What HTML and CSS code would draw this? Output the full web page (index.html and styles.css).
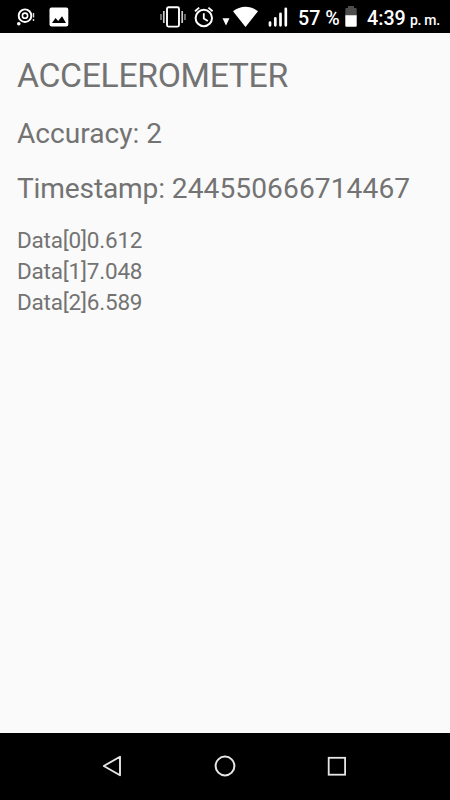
FILE: index.html
```html
<!DOCTYPE html>
<html lang="en">

<head>
    <meta charset="UTF-8">
    <meta name="viewport" content="width=device-width, initial-scale=1.0">
    <title>Accelerometer</title>
    <link rel="stylesheet" href="styles.css">
</head>

<body>
    <div class="status-bar">
        <svg class="icon-app" width="20" height="20" viewBox="0 0 20 20">
            <circle cx="9" cy="8.7" r="6.3" fill="none" stroke="#fff" stroke-width="1.9"/>
            <circle cx="9" cy="8.7" r="2.6" fill="none" stroke="#fff" stroke-width="1.6"/>
            <circle cx="2.8" cy="16.8" r="1.8" fill="#fff"/>
            <path d="M17.5 6v4.5M17.5 12v2" stroke="#ddd" stroke-width="1.4"/>
        </svg>
        <svg class="icon-image" width="20" height="20" viewBox="0 0 20 20">
            <rect x="0.5" y="0.4" width="18.8" height="19" rx="2" fill="#fff"/>
            <path d="M3 16l3.5-5 2.7 3L13 9.3l4 6.7z" fill="#000"/>
        </svg>
        <div class="status-right">
            <svg class="icon-vibrate" width="26" height="22" viewBox="0 0 26 22">
                <rect x="7" y="1.2" width="12" height="19.4" rx="1.5" fill="none" stroke="#fff" stroke-width="1.9"/>
                <path d="M3.8 5v12M22.2 5v12" stroke="#ccc" stroke-width="1.7"/>
                <path d="M1 8v6M25 8v6" stroke="#999" stroke-width="1.4"/>
            </svg>
            <svg class="icon-alarm" width="20" height="22" viewBox="0 0 20 22">
                <circle cx="9.8" cy="12" r="8.2" fill="none" stroke="#fff" stroke-width="2"/>
                <path d="M9.8 7.2v5.3l4 2.4M1 5.3l4.2-3.7M18.6 5.3l-4.2-3.7" fill="none" stroke="#fff" stroke-width="1.8"/>
            </svg>
            <svg class="icon-wifi" width="37" height="22" viewBox="0 0 37 22">
                <path d="M0.5 12.2h7L4 19.4z" fill="#fff"/>
                <path d="M11 5.2C18.5-0.9 28.5-0.9 36 5.2L23.5 21z" fill="#fff"/>
            </svg>
            <svg class="icon-signal" width="20" height="22" viewBox="0 0 20 22">
                <path d="M2 16.5v2.8M7.3 12.3v7M12.5 7.8v11.5M17.8 2.8v16.5" stroke="#fff" stroke-width="2.7" stroke-linecap="round"/>
            </svg>
            <span class="percent">57 %</span>
            <svg class="icon-battery" width="12" height="22" viewBox="0 0 12 22">
                <path d="M0.3 11V3q0-1 1-1H3V0h6v2h1.7q1 0 1 1v8z" fill="#4d4d4d"/>
                <path d="M0.3 9.3h11.4v10.2q0 1.2-1 1.2H1.3q-1 0-1-1.2z" fill="#fff"/>
            </svg>
            <span class="clock">4:39</span>
            <span class="period">p. m.</span>
        </div>
    </div>

    <div class="content">
        <div class="sensor-name">ACCELEROMETER</div>
        <div class="info accuracy">Accuracy: 2</div>
        <div class="info timestamp">Timestamp: <span class="digits">244550666714467</span></div>
        <div class="data">
            <div>Data[0]0.612</div>
            <div>Data[1]7.048</div>
            <div>Data[2]6.589</div>
        </div>
    </div>

    <div class="nav-bar">
        <svg width="24" height="24" viewBox="0 0 24 24">
            <path d="M20 2.7v18.6L3.8 12z" fill="none" stroke="#e6e6e6" stroke-width="1.9" stroke-linejoin="round"/>
        </svg>
        <svg width="24" height="24" viewBox="0 0 24 24">
            <circle cx="12" cy="12" r="9.4" fill="none" stroke="#e6e6e6" stroke-width="2"/>
        </svg>
        <svg width="24" height="24" viewBox="0 0 24 24">
            <rect x="3.7" y="3.8" width="16.4" height="16.9" fill="none" stroke="#e6e6e6" stroke-width="1.8"/>
        </svg>
    </div>
</body>

</html>
```
FILE: styles.css
```css
* {
    box-sizing: border-box;
}

body {
    display: flex;
    flex-direction: column;
    height: 100vh;
    margin: 0;
    background-color: #fafafa;
    font-family: Roboto, sans-serif;
    color: #737373;
}

svg {
    display: block;
    flex: none;
}

/* status bar */
.status-bar {
    display: flex;
    align-items: flex-start;
    height: 33px;
    padding: 6px 10px 0 16px;
    background-color: #000;
    color: #fff;
}

.status-right {
    display: flex;
    align-items: flex-start;
    margin-left: auto;
    white-space: nowrap;
}

.icon-app {
    margin-top: 1px;
}

.icon-image {
    margin: 1px 0 0 13px;
}

.icon-alarm {
    margin-left: 8px;
}

.icon-wifi {
    margin-left: 8px;
}

.icon-signal {
    margin-left: 9px;
}

.percent,
.clock,
.period {
    font-size: 19.7px;
    font-weight: 500;
    line-height: 25px;
}

.percent {
    width: 42px;
    margin-left: 10px;
}

.icon-battery {
    margin-left: 5px;
}

.clock {
    width: 40px;
    margin-left: 10px;
}

.period {
    width: 30px;
    margin-left: 3px;
    font-size: 14px;
    letter-spacing: -0.3px;
    line-height: 29px;
}

/* sensor readings */
.content {
    flex: 1;
    padding: 22.5px 17px 0;
}

.sensor-name {
    font-size: 33.75px;
    letter-spacing: -0.35px;
    line-height: 40px;
}

.info {
    font-size: 28.125px;
    line-height: 34px;
}

.accuracy {
    margin-top: 21px;
}

.timestamp {
    margin-top: 21px;
    letter-spacing: -0.15px;
}

.digits {
    letter-spacing: 0.1px;
}

.data {
    margin-top: 19px;
    font-size: 22.5px;
    letter-spacing: -0.2px;
    line-height: 31px;
}

/* navigation buttons */
.nav-bar {
    display: flex;
    justify-content: center;
    gap: 88.5px;
    height: 67px;
    padding: 21px 1px 0 0;
    background-color: #000;
}
```
